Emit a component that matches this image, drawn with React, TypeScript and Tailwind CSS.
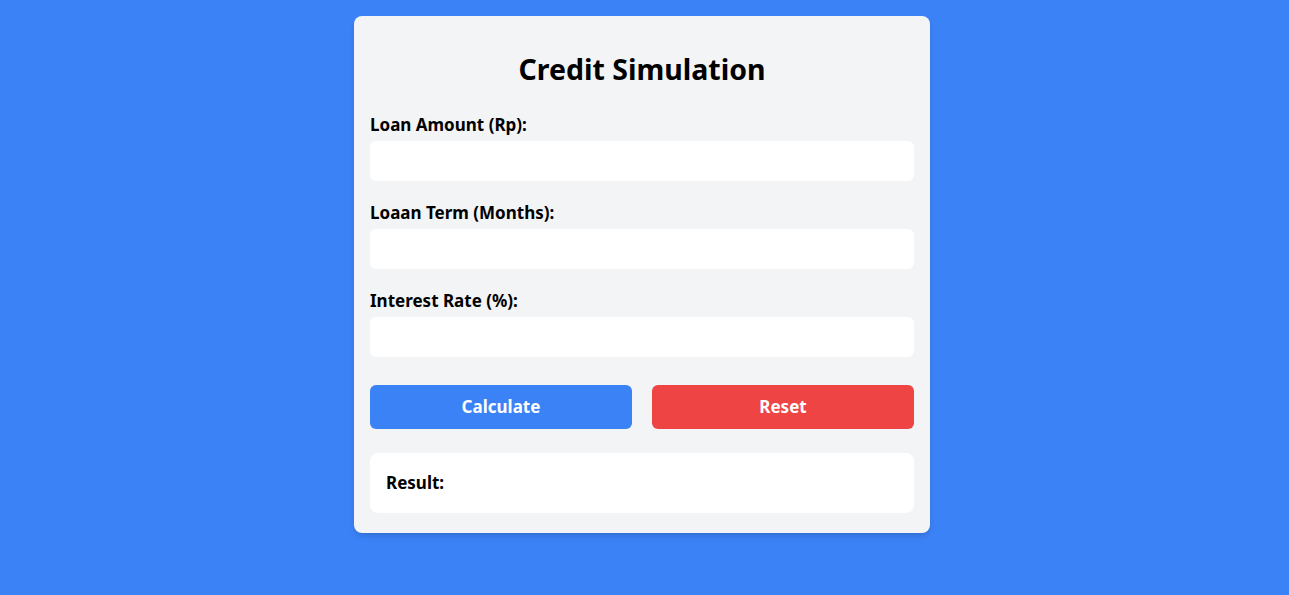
import React from "react";

const Field = ({ label }: { label: string }) => (
  <div className="mb-5">
    <label className="block mb-1 text-[17px] font-bold leading-6">{label}</label>
    <input
      type="text"
      className="block w-full h-10 rounded-md bg-white px-3 outline-none"
    />
  </div>
);

const App = () => {
  return (
    <div
      className="min-h-screen bg-[#3b82f6] pt-4 pr-[5px] text-black"
      style={{ fontFamily: "'Noto Sans', 'Open Sans', sans-serif" }}
    >
      <div className="mx-auto w-[576px] rounded-lg bg-[#f3f4f6] px-4 pt-[35px] pb-5 shadow-md">
        <h1 className="mb-[26px] text-center text-[28.5px] font-bold leading-9">
          Credit Simulation
        </h1>

        <Field label="Loan Amount (Rp):" />
        <Field label="Loaan Term (Months):" />
        <Field label="Interest Rate (%):" />

        <div className="mt-7 flex gap-5">
          <button className="h-11 flex-1 rounded-md bg-[#3b82f6] text-[17px] font-bold text-white">
            Calculate
          </button>
          <button className="h-11 flex-1 rounded-md bg-[#ef4444] text-[17px] font-bold text-white">
            Reset
          </button>
        </div>

        <div className="mt-6 flex h-[60px] items-center rounded-lg bg-white px-4">
          <p className="text-[17px] font-bold">Result:</p>
        </div>
      </div>
    </div>
  );
};

export default App;
